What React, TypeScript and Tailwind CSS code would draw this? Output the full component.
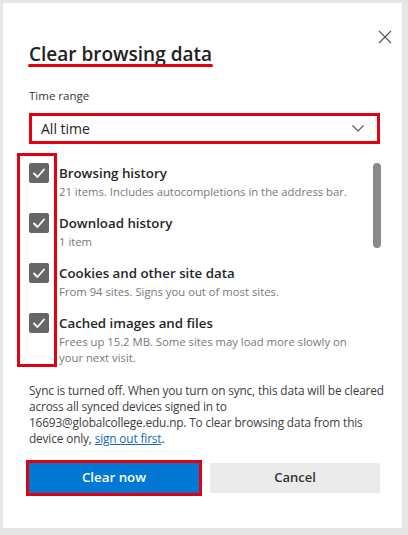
import React from 'react';

const RED = 'border-[#e3000f]';

interface ItemProps {
  title: string;
  detail: string;
  last?: boolean;
}

const CheckIcon: React.FC = () => (
  <svg viewBox="0 0 20 20" className="h-[20px] w-[20px]">
    <rect x="0" y="0" width="20" height="20" rx="2" fill="#666666" />
    <path d="M5 10.5 L8.5 14 L15 6.5" fill="none" stroke="#ffffff" strokeWidth="1.8" strokeLinecap="round" strokeLinejoin="round" />
  </svg>
);

const DataItem: React.FC<ItemProps> = ({ title, detail, last = false }) => (
  <div className={`flex gap-[10px] ${last ? '' : 'h-[50px]'}`}>
    <div className="shrink-0">
      <CheckIcon />
    </div>
    <div className="w-[300px]">
      <div className="text-[13.3px] leading-[20px] font-semibold text-[#262626]">{title}</div>
      <div className="mt-[1px] text-[11.3px] leading-[16px] text-[#787878]">{detail}</div>
    </div>
  </div>
);

export default function App() {
  return (
    <div className="w-[408px] h-[535px] bg-[#e6e6e6] pt-[3px] pl-[3px]" style={{ fontFamily: '"Open Sans", "Noto Sans", sans-serif' }}>
      <div className="relative w-[399px] h-[525px] bg-white pl-[26px] pt-[37px]">
        {/* close */}
        <button className="absolute left-[375px] top-[27px] text-[#555]">
          <svg viewBox="0 0 14 14" className="h-[14px] w-[14px]">
            <path d="M1 1 L13 13 M13 1 L1 13" stroke="currentColor" strokeWidth="1.1" />
          </svg>
        </button>

        {/* title */}
        <div className="relative inline-block">
          <h1 className="text-[19px] leading-[28px] font-semibold text-[#222]">Clear browsing data</h1>
          <div className="absolute left-[-1px] top-[24px] h-[3px] w-[185px] rounded-full bg-[#e3000f]" />
        </div>

        <div className="mt-[20px] text-[11.5px] leading-[16px] text-[#333]">Time range</div>

        <div className={`mt-[9px] flex h-[31px] w-[351px] items-center justify-between border-[3px] ${RED} pl-[9px] pr-[13px]`}>
          <span className="text-[14px] text-[#222]">All time</span>
          <svg viewBox="0 0 12 7" className="h-[7px] w-[12px]">
            <path d="M0.5 0.5 L6 6 L11.5 0.5" fill="none" stroke="#555" strokeWidth="1.1" />
          </svg>
        </div>

        {/* data types */}
        <div className="relative mt-[9px] h-[214px] pt-[10px]">
          <div className={`absolute left-[-12px] top-0 h-[214px] w-[40px] border-[3px] ${RED}`} />
          <div className="absolute left-[344px] top-[10px] h-[85px] w-[8px] rounded-full bg-[#8a8a8a]" />
          <DataItem title="Browsing history" detail="21 items. Includes autocompletions in the address bar." />
          <DataItem title="Download history" detail="1 item" />
          <DataItem title="Cookies and other site data" detail="From 94 sites. Signs you out of most sites." />
          <DataItem title="Cached images and files" detail="Frees up 15.2 MB. Some sites may load more slowly on your next visit." last />
        </div>

        <p className="mt-[15px] w-[365px] whitespace-nowrap text-[11.85px] tracking-[-0.15px] leading-[16px] text-[#404040]">
          Sync is turned off. When you turn on sync, this data will be cleared
          <br />
          across all synced devices signed in to
          <br />
          16693@globalcollege.edu.np. To clear browsing data from this
          <br />
          device only, <a className="text-[#0f6cbd] underline">sign out first</a>.
        </p>

        <div className="mt-[17px] flex gap-[11px]">
          <button className="h-[30px] w-[170px] bg-[#0078d4] text-[13.3px] font-semibold text-white ring-[3px] ring-[#e3000f]">
            Clear now
          </button>
          <button className="h-[30px] w-[170px] bg-[#ebebeb] text-[13px] font-semibold text-[#333]">Cancel</button>
        </div>
      </div>
    </div>
  );
}
